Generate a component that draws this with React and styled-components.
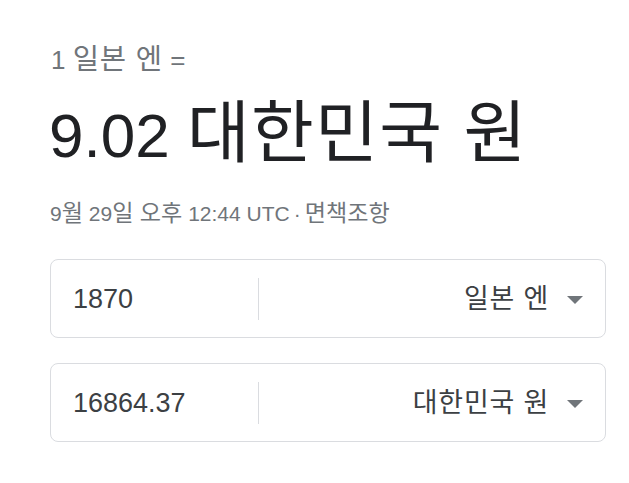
import React from 'react'
import styled, { createGlobalStyle } from 'styled-components'

const GlobalStyle = createGlobalStyle`
  body {
    margin: 0;
    background: #fff;
    font-family: "Liberation Sans", Arial, "Noto Sans CJK KR", sans-serif;
  }
`

const Card = styled.div`
  width: 556px;
  padding: 45px 0 0 50px;
  display: flex;
  flex-direction: column;
`

// Hangul runs: the reference face draws them larger and wider than Noto CJK
const Ko = styled.span`
  font-size: 1.1em;
  letter-spacing: ${(p) => p.$spacing ?? 0.03}em;
  line-height: 0;
`

const Header = styled.div`
  font-size: 26px;
  line-height: 30px;
  color: #70757a;
  margin-left: 1px;
`

const Result = styled.div`
  font-size: 62px;
  line-height: 72px;
  color: #202124;
  margin-top: 25px;
  margin-left: -1px;
`

const Meta = styled.div`
  font-size: 21px;
  line-height: 24px;
  color: #70757a;
  margin-top: 30px;
  span.dot {
    margin: 0 4px;
  }
`

const Fields = styled.div`
  display: flex;
  flex-direction: column;
  gap: 25px;
  margin-top: 33px;
`

const Field = styled.div`
  height: 77px;
  border: 1px solid #dadce0;
  border-radius: 8px;
  display: flex;
  align-items: center;
`

const Amount = styled.div`
  width: 208px;
  padding-left: 22px;
  box-sizing: border-box;
  font-size: 27px;
  color: #3c4043;
  border-right: 1px solid #dadce0;
  height: 42px;
  line-height: 42px;
`

const Unit = styled.div`
  flex: 1;
  display: flex;
  align-items: center;
  justify-content: flex-end;
  gap: 18px;
  padding-right: 22px;
  font-size: 24.5px;
  line-height: 42px;
  color: #3c4043;
`

const Arrow = styled.span`
  width: 0;
  height: 0;
  border-left: 8px solid transparent;
  border-right: 8px solid transparent;
  border-top: 8px solid #70757a;
  margin-top: 2px;
`

const rows = [
  { amount: '1870', unit: '일본 엔' },
  { amount: '16864.37', unit: '대한민국 원' },
]

const App = () => {
  return (
    <>
      <GlobalStyle />
      <Card>
        <Header>1 <Ko>일본 엔</Ko> =</Header>
        <Result>9.02 <Ko $spacing={0.02}>대한민국 원</Ko></Result>
        <Meta>
          9<Ko $spacing={0}>월</Ko> 29<Ko $spacing={0}>일 오후</Ko> 12:44 UTC<span className="dot">·</span><Ko $spacing={0}>면책조항</Ko>
        </Meta>
        <Fields>
          {rows.map((r) => (
            <Field key={r.amount}>
              <Amount>{r.amount}</Amount>
              <Unit>
                <Ko>{r.unit}</Ko>
                <Arrow />
              </Unit>
            </Field>
          ))}
        </Fields>
      </Card>
    </>
  )
}

export default App
